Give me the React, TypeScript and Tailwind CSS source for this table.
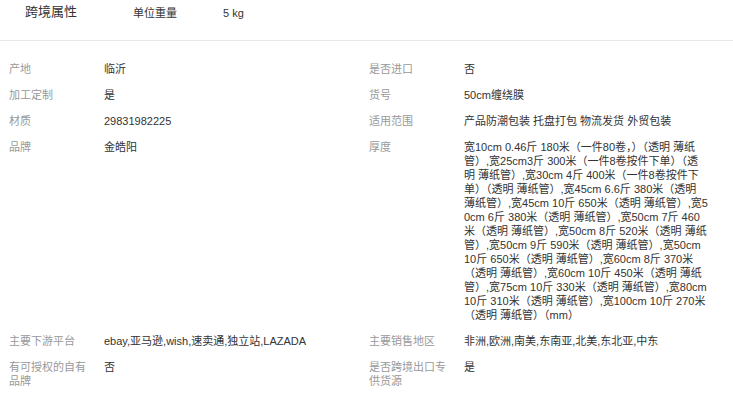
const thicknessLines = [
  '宽10cm 0.46斤 180米（一件80卷，）（透明 薄纸',
  '管）,宽25cm3斤 300米（一件8卷按件下单）（透',
  '明 薄纸管）,宽30cm 4斤 400米（一件8卷按件下',
  '单）（透明 薄纸管）,宽45cm 6.6斤 380米（透明',
  '薄纸管）,宽45cm 10斤 650米（透明 薄纸管）,宽5',
  '0cm 6斤 380米（透明 薄纸管）,宽50cm 7斤 460',
  '米（透明 薄纸管）,宽50cm 8斤 520米（透明 薄纸',
  '管）,宽50cm 9斤 590米（透明 薄纸管）,宽50cm',
  '10斤 650米（透明 薄纸管）,宽60cm 8斤 370米',
  '（透明 薄纸管）,宽60cm 10斤 450米（透明 薄纸',
  '管）,宽75cm 10斤 330米（透明 薄纸管）,宽80cm',
  '10斤 310米（透明 薄纸管）,宽100cm 10斤 270米',
  '（透明 薄纸管）（mm）',
];

type Row = { label: string; value: string | string[] };

const leftRows: Row[] = [
  { label: '产地', value: '临沂' },
  { label: '加工定制', value: '是' },
  { label: '材质', value: '29831982225' },
  { label: '品牌', value: '金皓阳' },
  { label: '主要下游平台', value: 'ebay,亚马逊,wish,速卖通,独立站,LAZADA' },
  { label: '有可授权的自有品牌', value: '否' },
];

const rightRows: Row[] = [
  { label: '是否进口', value: '否' },
  { label: '货号', value: '50cm缠绕膜' },
  { label: '适用范围', value: '产品防潮包装 托盘打包 物流发货 外贸包装' },
  { label: '厚度', value: thicknessLines },
  { label: '主要销售地区', value: '非洲,欧洲,南美,东南亚,北美,东北亚,中东' },
  { label: '是否跨境出口专供货源', value: '是' },
];

const Cell = ({ label, value }: Row) => (
  <div className="flex w-[360px] py-[6px]">
    <div className="w-[95px] shrink-0 pr-[10px] text-[#999]">{label}</div>
    <div className="w-[250px] break-all text-[#333]">
      {Array.isArray(value)
        ? value.map((line, i) => (
            <div key={i} className="whitespace-nowrap">
              {line}
            </div>
          ))
        : value}
    </div>
  </div>
);

export default function App() {
  return (
    <div className="h-[396px] w-[733px] overflow-hidden bg-white text-[11px] leading-[14px] font-['Liberation_Sans','Noto_Sans_CJK_SC',sans-serif]">
      {/* Header */}
      <div className="flex h-[41px] items-start border-b border-[#e8e8e8] pt-[3px]">
        <div className="w-[133px] pl-[25px] text-[13px] leading-[18px] text-[#333]">跨境属性</div>
        <div className="w-[90px] pt-[3px] text-[#333]">单位重量</div>
        <div className="pt-[3px] text-[#333]">5 kg</div>
      </div>

      {/* Attributes */}
      <div className="pl-[9px] pt-[15px]">
        {leftRows.map((row, i) => (
          <div key={row.label} className="flex">
            <Cell label={row.label} value={row.value} />
            <Cell label={rightRows[i].label} value={rightRows[i].value} />
          </div>
        ))}
      </div>
    </div>
  );
}
